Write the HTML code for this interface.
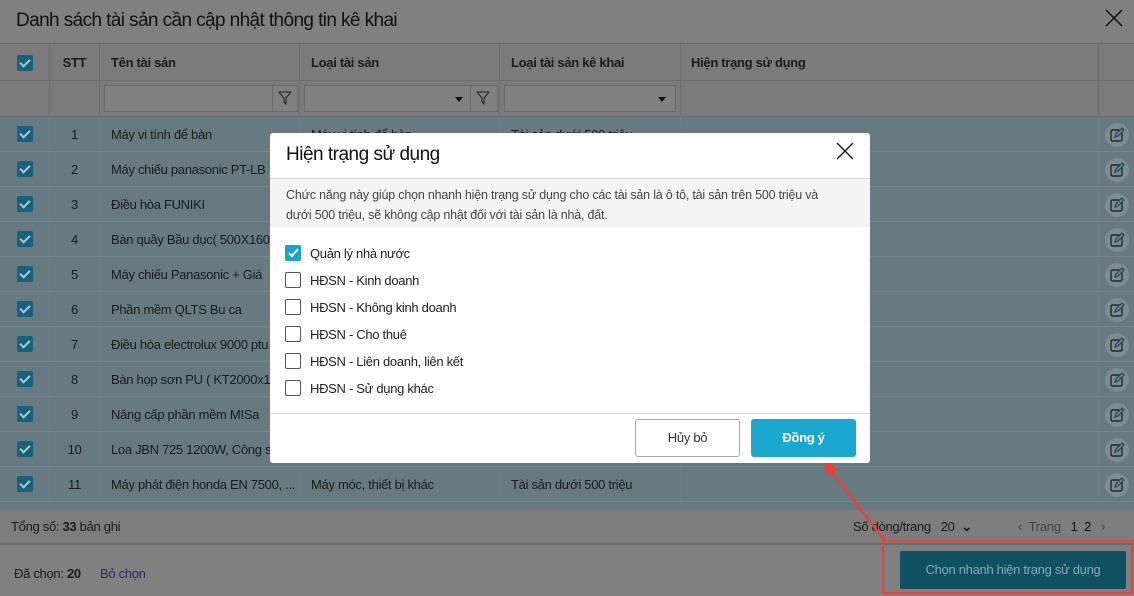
<!DOCTYPE html>
<html><head><meta charset="utf-8"><style>
*{box-sizing:border-box;margin:0;padding:0}
body{width:1134px;height:596px;overflow:hidden;background:#7f7f7f;font-family:"Liberation Sans",sans-serif;font-size:13px;letter-spacing:-0.3px;color:#1b1b1b;position:relative}
.abs{position:absolute}
.title{left:0;top:0;width:1134px;height:44px;background:#808080;border-bottom:1px solid #6d6d6d}
.title span{position:absolute;left:16px;top:10px;font-size:19px;letter-spacing:-0.6px;color:#111}
.hdr{left:0;top:44px;width:1134px;height:37px;background:#7b7b7b;border-bottom:1px solid #6f6f6f;font-weight:bold}
.flt{left:0;top:81px;width:1134px;height:36px;background:#7b7b7b;border-bottom:1px solid #6f6f6f}
.row{left:0;width:1134px;height:35px;background:#677a81;border-bottom:1px solid #72858c}
.c{position:absolute;top:0;height:100%;border-right:1px solid #6d7f86;line-height:35px;white-space:nowrap;overflow:hidden}
.hdr .c{border-right:1px solid #6e6e6e;line-height:38px}
.flt .c{border-right:1px solid #6e6e6e}
.cb{position:absolute;left:17px;width:16px;height:16px;background:#17627a;border-radius:2px}
.cb:after{content:"";position:absolute;left:5px;top:2px;width:4px;height:8px;border:solid #a8c9d2;border-width:0 2px 2px 0;transform:rotate(45deg)}
.inp{position:absolute;top:4px;height:27px;border:1px solid #6a6a6a;background:#808080}
.ed{position:absolute;left:1105px;top:6px;width:24px;height:24px;border-radius:12px;background:#7d8c91}
.modal{left:270px;top:133px;width:600px;height:330px;background:#fff;border-radius:3px}
.ck{position:absolute;left:15px;width:16px;height:16px;border:1.5px solid #555;border-radius:2px;background:#fff}
.opt{position:absolute;left:40px;font-size:13px;color:#222}
</style></head><body>
<div class="abs title"><span>Danh sách tài sản cần cập nhật thông tin kê khai</span>
<svg class="abs" style="left:1105px;top:9px" width="18" height="18"><path d="M1 1L17 17M17 1L1 17" stroke="#111" stroke-width="1.5"/></svg></div>
<div class="abs hdr">
<div class="c" style="left:0;width:50px"><div class="cb" style="top:11px"></div></div>
<div class="c" style="left:50px;width:50px;text-align:center">STT</div>
<div class="c" style="left:100px;width:200px;padding-left:11px">Tên tài sản</div>
<div class="c" style="left:300px;width:200px;padding-left:11px">Loại tài sản</div>
<div class="c" style="left:500px;width:181px;padding-left:11px">Loại tài sản kê khai</div>
<div class="c" style="left:681px;width:418px;padding-left:10px">Hiện trạng sử dụng</div>
</div>
<div class="abs flt">
<div class="c" style="left:0;width:50px"></div><div class="c" style="left:50px;width:50px"></div>
<div class="c" style="left:100px;width:200px"><div class="inp" style="left:4px;width:194px"></div><div class="abs" style="left:172px;top:4px;height:27px;border-left:1px solid #6a6a6a"></div><svg class="abs" style="left:178px;top:10px" width="14" height="14"><path d="M1 1H13L8 7V13L6 11V7Z" fill="none" stroke="#222"/></svg></div>
<div class="c" style="left:300px;width:200px"><div class="inp" style="left:4px;width:194px"></div><div class="abs" style="left:155px;top:16px;border:4px solid transparent;border-top:5px solid #111"></div><div class="abs" style="left:170px;top:4px;height:27px;border-left:1px solid #6a6a6a"></div><svg class="abs" style="left:176px;top:10px" width="14" height="14"><path d="M1 1H13L8 7V13L6 11V7Z" fill="none" stroke="#222"/></svg></div>
<div class="c" style="left:500px;width:181px"><div class="inp" style="left:4px;width:172px"></div><div class="abs" style="left:158px;top:16px;border:4px solid transparent;border-top:5px solid #111"></div></div>
<div class="c" style="left:681px;width:418px"></div>
</div>
<div id="rows"></div>
<script>
var n=["Máy vi tính để bàn","Máy chiếu panasonic PT-LB","Điều hòa FUNIKI","Bàn quầy Bầu dục( 500X160","Máy chiếu Panasonic + Giá","Phần mềm QLTS Bu ca","Điều hòa electrolux 9000 ptu","Bàn họp sơn PU ( KT2000x1","Nâng cấp phần mềm MISa","Loa JBN 725 1200W, Công s","Máy phát điện honda EN 7500, ..."];
var ic='<svg class="abs" style="left:1109px;top:10px" width="16" height="16"><rect x="2" y="3" width="11" height="11" rx="1.5" fill="none" stroke="#1e2a30" stroke-width="1.4"/><path d="M6 10L7 7L13 1L15 3L9 9Z" fill="#7d8c91" stroke="#1e4f60" stroke-width="1.3"/></svg>';
var h="";for(var i=0;i<11;i++){var t=117+i*35;h+='<div class="abs row" style="top:'+t+'px"><div class="c" style="left:0;width:50px"><div class="cb" style="top:9px"></div></div><div class="c" style="left:50px;width:50px;text-align:center">'+(i+1)+'</div><div class="c" style="left:100px;width:200px;padding-left:11px">'+n[i]+'</div><div class="c" style="left:300px;width:200px;padding-left:11px">'+(i==10?'Máy móc, thiết bị khác':i==0?'Máy vi tính để bàn':'')+'</div><div class="c" style="left:500px;width:181px;padding-left:11px">'+(i==10||i==0?'Tài sản dưới 500 triệu':'')+'</div><div class="c" style="left:681px;width:418px"></div><div class="ed"></div>'+ic+'</div>';}
document.getElementById('rows').innerHTML=h;
</script>
<div class="abs" style="left:0;top:502px;width:1134px;height:8px;background:#677a81"></div>
<div class="abs" style="left:0;top:510px;width:1134px;height:35px;background:#7d7d7d;border-bottom:2px solid #6a6a6a;line-height:34px">
<span class="abs" style="left:11px">Tổng số: <b>33</b> bản ghi</span>
<span class="abs" style="left:853px">Số dòng/trang &nbsp; 20 &nbsp;<b>⌄</b></span>
<span class="abs" style="left:1018px;color:#444">‹ &nbsp;Trang &nbsp; <span style="color:#111">1 &nbsp;2</span> &nbsp; ›</span></div>
<div class="abs" style="left:0;top:547px;width:1134px;height:49px;background:#808080">
<span class="abs" style="left:14px;top:19px">Đã chọn: <b>20</b></span><span class="abs" style="left:100px;top:19px;color:#1e2f6e">Bỏ chọn</span>
<div class="abs" style="left:900px;top:4px;width:226px;height:38px;background:#0f5163;border-radius:2px;color:#8aa7b0;text-align:center;line-height:38px">Chọn nhanh hiện trạng sử dụng</div></div>
<div class="abs" style="left:882px;top:540px;width:251px;height:54px;border:2px solid #e8403f"></div>
<svg class="abs" style="left:0;top:0" width="1134" height="596"><path d="M885 541L827 466" stroke="#e8403f" stroke-width="2.5"/><path d="M824 461L836 469L828 474Z" fill="#e8403f" stroke="#e8403f" stroke-width="2"/></svg>
<div class="abs modal">
<div class="abs" style="left:16px;top:11px;font-size:19px;letter-spacing:-0.5px;color:#111">Hiện trạng sử dụng</div>
<svg class="abs" style="left:566px;top:9px" width="18" height="18"><path d="M1 1L17 17M17 1L1 17" stroke="#111" stroke-width="1.3"/></svg>
<div class="abs" style="left:0;top:45px;width:600px;height:49px;background:#f4f4f4;border-top:1px solid #ddd;padding:6px 36px 6px 16px;line-height:20px;color:#444;font-size:12.5px;letter-spacing:-0.2px">Chức năng này giúp chọn nhanh hiện trạng sử dụng cho các tài sản là ô tô, tài sản trên 500 triệu và dưới 500 triệu, sẽ không cập nhật đối với tài sản là nhà, đất.</div>
<div class="ck" style="top:112px;background:#1ba1cb;border-color:#1ba1cb"></div><svg class="abs" style="left:17px;top:114px" width="13" height="12"><path d="M2 6L5 9L11 2" stroke="#fff" stroke-width="2" fill="none"/></svg>
<div class="opt" style="top:113px">Quản lý nhà nước</div>
<div class="ck" style="top:139px"></div><div class="opt" style="top:140px">HĐSN - Kinh doanh</div>
<div class="ck" style="top:166px"></div><div class="opt" style="top:167px">HĐSN - Không kinh doanh</div>
<div class="ck" style="top:193px"></div><div class="opt" style="top:194px">HĐSN - Cho thuê</div>
<div class="ck" style="top:220px"></div><div class="opt" style="top:221px">HĐSN - Liên doanh, liên kết</div>
<div class="ck" style="top:247px"></div><div class="opt" style="top:248px">HĐSN - Sử dụng khác</div>
<div class="abs" style="left:0;top:280px;width:600px;border-top:1px solid #ddd"></div>
<div class="abs" style="left:365px;top:286px;width:105px;height:38px;border:1px solid #aaa;border-radius:3px;text-align:center;line-height:36px;color:#333">Hủy bỏ</div>
<div class="abs" style="left:481px;top:286px;width:105px;height:38px;background:#1ba7d0;border-radius:3px;text-align:center;line-height:38px;color:#fff;font-weight:bold">Đồng ý</div>
</div>
</body></html>
